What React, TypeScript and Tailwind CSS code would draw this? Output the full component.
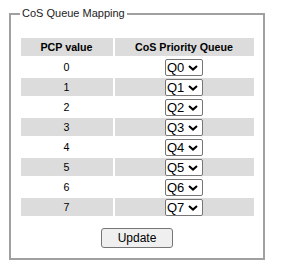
import { useState } from "react";

const rows = [0, 1, 2, 3, 4, 5, 6, 7];

function QueueSelect({ initial }: { initial: number }) {
  const [value, setValue] = useState(initial);
  return (
    <div className="relative mx-auto h-[17px] w-[38px]">
      <select
        value={value}
        onChange={(e) => setValue(Number(e.target.value))}
        className="block h-[17px] w-[38px] appearance-none rounded-[2px] border border-[#767676] bg-white pl-[1px] text-[13px] leading-[15px] text-black outline-none"
      >
        {rows.map((q) => (
          <option key={q} value={q}>
            Q{q}
          </option>
        ))}
      </select>
      <svg
        className="pointer-events-none absolute right-[5px] top-[6px]"
        width="10"
        height="6"
        viewBox="0 0 10 6"
      >
        <path d="M1 1 L5 4.6 L9 1" fill="none" stroke="#000" strokeWidth="2" />
      </svg>
    </div>
  );
}

export default function App() {
  return (
    <div className="h-[272px] w-[282px] bg-white pt-[7px] font-['Liberation_Sans',Arial,sans-serif] text-black">
      <fieldset className="ml-[9px] w-[256px] border-2 border-[#a0a0a0] pb-[10px]">
        <legend className="ml-[9px] px-[2px] text-[11px] leading-[13px] text-[#222]">
          CoS Queue Mapping
        </legend>
        <table className="mx-auto mt-[16px] border-separate border-spacing-[2px] text-[10.7px]">
          <thead>
            <tr className="bg-[#dcdcdc]">
              <th className="h-[18px] w-[92px] p-0 font-bold">PCP value</th>
              <th className="h-[18px] w-[139px] p-0 font-bold">CoS Priority Queue</th>
            </tr>
          </thead>
          <tbody>
            {rows.map((r) => (
              <tr key={r} className={r % 2 === 1 ? "bg-[#dcdcdc]" : ""}>
                <td className="h-[18px] p-0 text-center">{r}</td>
                <td className="h-[18px] p-0 text-center">
                  <QueueSelect initial={r} />
                </td>
              </tr>
            ))}
          </tbody>
        </table>
        <div className="mt-[10px] flex justify-center">
          <button className="h-[20px] w-[72px] rounded-[3px] border border-[#767676] bg-[#efefef] text-[12px] leading-[18px] text-black">
            Update
          </button>
        </div>
      </fieldset>
    </div>
  );
}
